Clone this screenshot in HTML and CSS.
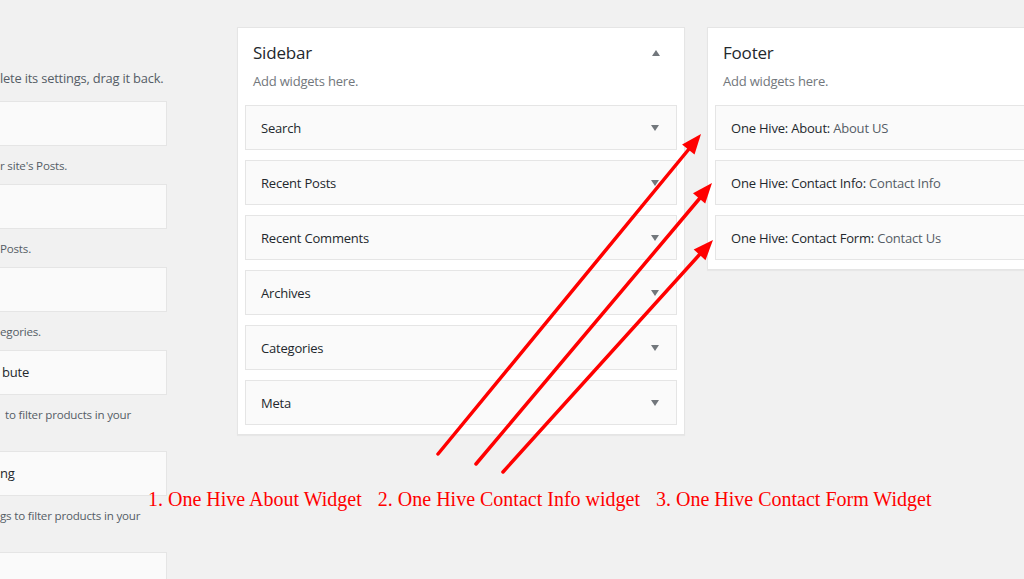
FILE: index.html
```html
<!DOCTYPE html>
<html lang="en">
<head>
    <meta charset="UTF-8">
    <title>Widgets</title>
    <link rel="stylesheet" href="styles.css">
</head>
<body>
    <div class="widgets-wrap">
        <div class="available">
            <p class="intro">lete its settings, drag it back.</p>

            <div class="avail-widget"></div>
            <p class="avail-desc">r site's Posts.</p>

            <div class="avail-widget"></div>
            <p class="avail-desc">Posts.</p>

            <div class="avail-widget"></div>
            <p class="avail-desc">egories.</p>

            <div class="avail-widget"><span class="avail-title shift">bute</span></div>
            <p class="avail-desc two-line shift-more">to filter products in your</p>

            <div class="avail-widget"><span class="avail-title">ng</span></div>
            <p class="avail-desc two-line">gs to filter products in your</p>

            <div class="avail-widget"></div>
        </div>

        <div class="sidebar-panel">
            <div class="panel-head">
                <h2>Sidebar</h2>
                <span class="toggle up"></span>
            </div>
            <p class="panel-desc">Add widgets here.</p>
            <div class="widget"><h3>Search</h3><span class="toggle"></span></div>
            <div class="widget"><h3>Recent Posts</h3><span class="toggle"></span></div>
            <div class="widget"><h3>Recent Comments</h3><span class="toggle"></span></div>
            <div class="widget"><h3>Archives</h3><span class="toggle"></span></div>
            <div class="widget"><h3>Categories</h3><span class="toggle"></span></div>
            <div class="widget"><h3>Meta</h3><span class="toggle"></span></div>
        </div>

        <div class="sidebar-panel">
            <div class="panel-head">
                <h2>Footer</h2>
            </div>
            <p class="panel-desc">Add widgets here.</p>
            <div class="widget"><h3>One Hive: About: <span class="in-title">About US</span></h3></div>
            <div class="widget"><h3>One Hive: Contact Info: <span class="in-title">Contact Info</span></h3></div>
            <div class="widget"><h3>One Hive: Contact Form: <span class="in-title">Contact Us</span></h3></div>
        </div>
    </div>

    <!-- annotation drawn over the screenshot -->
    <div class="annotation">
        <svg class="arrows" width="1024" height="579" viewBox="0 0 1024 579">
            <g stroke="#ff0000" stroke-width="3.5" stroke-linecap="round" fill="none">
                <line x1="438" y1="454" x2="689" y2="149"/>
                <line x1="476" y1="464" x2="700" y2="198"/>
                <line x1="503" y1="472" x2="700" y2="254"/>
            </g>
            <g fill="#ff0000">
                <polygon points="701,134 694.5,154.6 682.1,144.4"/>
                <polygon points="712,183 705.2,203.4 693,193.2"/>
                <polygon points="713,240 705.5,260.2 693.7,249.4"/>
            </g>
        </svg>
        <div class="caption">
            <span>1. One Hive About Widget</span>
            <span>2. One Hive Contact Info widget</span>
            <span>3. One Hive Contact Form Widget</span>
        </div>
    </div>
</body>
</html>
```

FILE: styles.css
```css
body {
    margin: 0;
    background-color: #f1f1f1;
    font-family: "Open Sans", "Noto Sans", sans-serif;
    font-size: 13px;
    letter-spacing: -0.2px;
    color: #23282d;
    width: 1024px;
    height: 579px;
    overflow: hidden;
    position: relative;
}
.widgets-wrap {
    display: flex;
    align-items: flex-start;
    padding-top: 27px;
}
.available {
    width: 167px;
    flex-shrink: 0;
    margin-right: 70px;
    overflow: hidden;
    white-space: nowrap;
    color: #555d66;
}
.intro {
    margin: 41px 0 13px;
    line-height: 20px;
    font-size: 12.9px;
}
.avail-widget {
    height: 43px;
    background-color: #fafafa;
    border: 1px solid #e5e5e5;
    border-left: 0;
    line-height: 43px;
}
.avail-title {
    color: #23282d;
}
.shift {
    margin-left: 2px;
}
.avail-desc {
    margin: 11px 0 9px;
    line-height: 18px;
    font-size: 11.6px;
}
.avail-desc.two-line {
    height: 36px;
}
.shift-more {
    margin-left: 5px;
}
.sidebar-panel {
    width: 432px;
    flex-shrink: 0;
    background-color: #fff;
    border: 1px solid #e5e5e5;
    box-shadow: 0 1px 1px rgba(0, 0, 0, 0.04);
    padding: 14px 7px 9px;
    margin-right: 22px;
}
.panel-head {
    display: flex;
    align-items: center;
    justify-content: space-between;
    padding: 0 8px;
}
.panel-head h2 {
    margin: 0;
    font-size: 17px;
    font-weight: 500;
    line-height: 22px;
}
.panel-desc {
    margin: 8px 8px 15px;
    line-height: 18px;
    color: #72777c;
}
.widget {
    display: flex;
    align-items: center;
    justify-content: space-between;
    height: 43px;
    padding: 0 17px 0 15px;
    background-color: #fafafa;
    border: 1px solid #e5e5e5;
    margin-bottom: 10px;
}
.widget:last-child {
    margin-bottom: 0;
}
.widget h3 {
    margin: 0;
    font-size: 13px;
    font-weight: 400;
}
.in-title {
    color: #555d66;
}
.toggle {
    width: 0;
    height: 0;
    border-left: 4.5px solid transparent;
    border-right: 4.5px solid transparent;
    border-top: 6px solid #72777c;
}
.toggle.up {
    border-top: 0;
    border-bottom: 6px solid #72777c;
    margin-right: 9px;
}
.annotation {
    position: absolute;
    left: 0;
    top: 0;
    width: 1024px;
    height: 579px;
    pointer-events: none;
}
.arrows {
    position: absolute;
    left: 0;
    top: 0;
}
.caption {
    position: absolute;
    left: 148px;
    top: 487px;
    display: flex;
    gap: 16px;
    font-family: "Liberation Serif", serif;
    font-size: 20px;
    letter-spacing: 0;
    line-height: 24px;
    color: #ff0000;
    white-space: nowrap;
}
```
